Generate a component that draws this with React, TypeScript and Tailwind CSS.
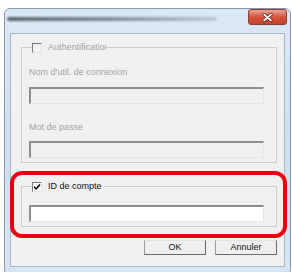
function CheckBox({ checked }: { checked?: boolean }) {
  return (
    <span
      className={`w-[10px] h-[10px] shrink-0 flex items-center justify-center border border-t-[#7a7a7a] border-l-[#7a7a7a] border-b-[#e4e4e4] border-r-[#e4e4e4] ${
        checked ? 'bg-white' : 'bg-[#f0f0f0]'
      }`}
    >
      {checked && (
        <svg width="8" height="8" viewBox="0 0 8 8">
          <polyline points="1,3.8 3,5.8 7,1.6" fill="none" stroke="#111" strokeWidth="1.6" />
        </svg>
      )}
    </span>
  );
}

function Field({ disabled }: { disabled?: boolean }) {
  return (
    <div
      className={`w-[235px] h-[17px] border-t-2 border-l-2 border-b border-r border-t-[#8e8e8e] border-l-[#8e8e8e] border-b-[#e6e6e6] border-r-[#e6e6e6] ${
        disabled ? 'bg-[#f0f0f0]' : 'bg-white'
      }`}
    />
  );
}

function Button({ label }: { label: string }) {
  return (
    <button className="w-[62px] h-[15px] flex items-center justify-center bg-[#efefef] border border-t-[#e2e2e2] border-l-[#9a9a9a] border-b-[#6a6a6a] border-r-[#6a6a6a] text-[9px] leading-none text-[#111]">
      {label}
    </button>
  );
}

export default function App() {
  return (
    <div className="relative w-[292px] h-[272px] bg-white overflow-hidden font-['Liberation_Sans',Arial,sans-serif] text-[9px]">
      {/* Window frame */}
      <div className="ml-[4px] mt-[8px] w-[287px] h-[266px] rounded-t-[6px] rounded-b-[4px] border border-[#8799ae] bg-gradient-to-b from-[#dbe8f6] via-[#cddff1] to-[#d6e5f4] flex flex-col">
        {/* Title bar (blurred title) */}
        <div className="h-[24px] flex items-start">
          <div className="ml-[2px] mt-[8px] w-[210px] h-[4px] rounded-full bg-gradient-to-r from-[#5f6570] via-[#868f9b] to-[#bccad8] blur-[1px]" />
          <div className="ml-auto mr-[3px] w-[39px] h-[16px] rounded-[3px] border border-[#8a3a2e] bg-gradient-to-b from-[#e9a595] via-[#d4543d] to-[#c5402a] flex items-center justify-center">
            <svg width="11" height="9" viewBox="0 0 11 9">
              <path d="M2 1.5 L9 7.5 M9 1.5 L2 7.5" stroke="#5b1d14" strokeWidth="3.2" strokeLinecap="round" />
              <path d="M2 1.5 L9 7.5 M9 1.5 L2 7.5" stroke="#ffffff" strokeWidth="1.7" strokeLinecap="round" />
            </svg>
          </div>
        </div>

        {/* Client area */}
        <div className="mx-[5px] h-[234px] bg-[#f0f0f0] border border-[#aab6c4] pl-[10px] pr-[7px] flex flex-col">
          <fieldset className="mt-[8px] w-[256px] border border-[#cdcdcd] px-[7px] pb-[4px]">
            <legend className="ml-[3px] w-[74px] h-[11px] flex items-center gap-[6px] overflow-hidden whitespace-nowrap leading-[11px] text-[#a3a3a3]">
              <CheckBox />
              <span>Authentification</span>
            </legend>
            <div className="mt-[14px] leading-[11px] text-[#a3a3a3]">Nom d'util. de connexion</div>
            <div className="mt-[9px]">
              <Field disabled />
            </div>
            <div className="mt-[18px] leading-[11px] text-[#a3a3a3]">Mot de passe</div>
            <div className="mt-[8px]">
              <Field disabled />
            </div>
          </fieldset>

          <fieldset className="mt-[18px] w-[256px] border border-[#cdcdcd] px-[7px] pb-[4px]">
            <legend className="ml-[3px] w-[72px] h-[11px] flex items-center gap-[6px] overflow-hidden whitespace-nowrap leading-[11px] text-[#111]">
              <CheckBox checked />
              <span>ID de compte</span>
            </legend>
            <div className="mt-[13px]">
              <Field />
            </div>
          </fieldset>

          <div className="mt-[13px] w-[256px] flex justify-end gap-[9px]">
            <Button label="OK" />
            <Button label="Annuler" />
          </div>
        </div>
      </div>

      {/* Red highlight annotation */}
      <div className="absolute left-[10px] top-[171px] w-[277px] h-[67px] border-[4px] border-[#e60012] rounded-[12px]" />
    </div>
  );
}
